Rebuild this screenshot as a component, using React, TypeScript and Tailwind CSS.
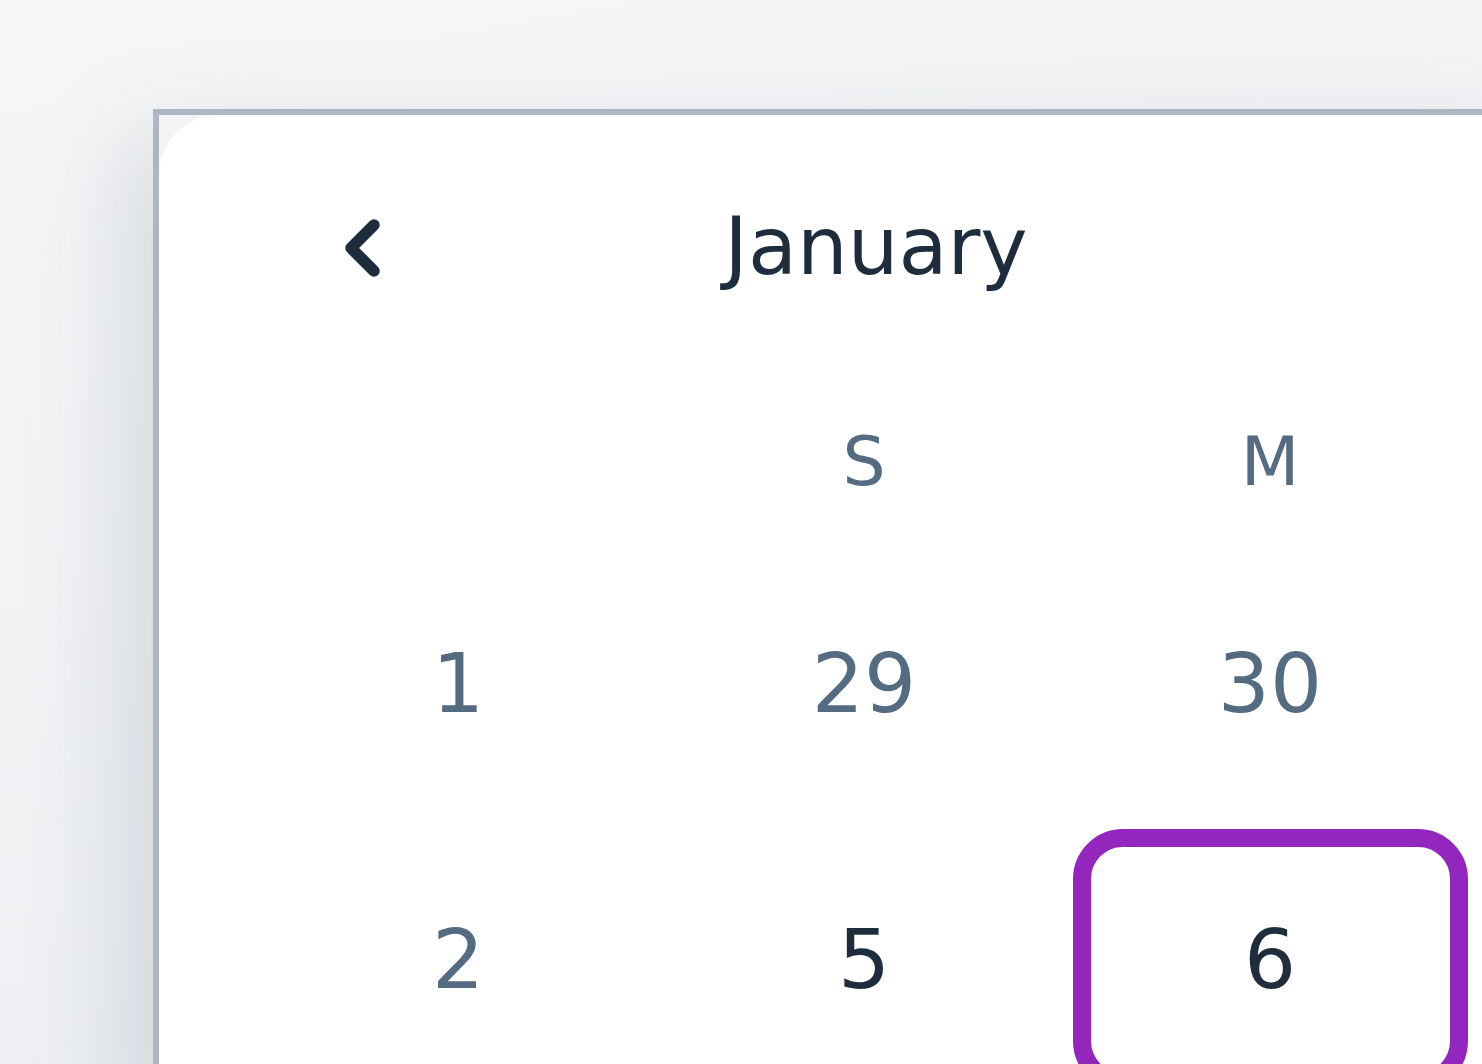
import React from "react";

const weekdays = ["S", "M"];

const rows = [
  { week: "1", days: [{ n: "29", muted: true }, { n: "30", muted: true }] },
  { week: "2", days: [{ n: "5" }, { n: "6", selected: true }] },
];

const ChevronLeft = () => (
  <svg width="48" height="64" viewBox="0 0 48 64" fill="none">
    <path
      d="M35 10 L12 33 L35 56"
      stroke="#1d2d3e"
      strokeWidth="11.5"
      strokeLinecap="round"
      strokeLinejoin="round"
    />
  </svg>
);

const App = () => {
  return (
    <div
      className="w-[1482px] h-[1064px] overflow-hidden bg-[linear-gradient(170deg,#f5f6f7,#eceef1)] pl-[153px] pt-[109px]"
      style={{ fontFamily: '"DejaVu Sans", "Noto Sans", sans-serif' }}
    >
      <div className="w-[1400px] h-[1000px] border-l-[6px] border-t-[6px] border-[#aeb6c1] bg-[#f2f4f6] shadow-[-30px_30px_90px_rgba(90,105,125,0.18)]">
        <div className="h-full w-full bg-white rounded-tl-[60px] pl-[96px] pt-[82px]">
          {/* header */}
          <div className="flex items-center h-[100px]">
            <button className="ml-[60px] w-[96px] h-[96px] flex items-center justify-center">
              <ChevronLeft />
            </button>
            <div className="w-[930px] text-center text-[80px] leading-none text-[#1d2d3e]">
              January
            </div>
          </div>

          {/* weekday row */}
          <div className="grid grid-cols-[406px_406px_406px] mt-[100px] h-[130px] items-center text-center text-[68px] leading-none text-[#556b82]">
            <div />
            {weekdays.map((d) => (
              <div key={d}>{d}</div>
            ))}
          </div>

          {/* day rows */}
          <div className="mt-[19px]">
            {rows.map((r) => (
              <div
                key={r.week}
                className="grid grid-cols-[406px_406px_406px] h-[276px] items-center text-center text-[82px] leading-none"
              >
                <div className="text-[#556b82]">{r.week}</div>
                {r.days.map((d) => (
                  <div key={d.n} className="flex justify-center">
                    <div
                      className={
                        d.selected
                          ? "w-[395px] h-[262px] rounded-[50px] border-[18px] border-[#9327bd] flex items-center justify-center text-[#1d2d3e]"
                          : d.muted
                          ? "w-[395px] h-[262px] flex items-center justify-center text-[#556b82]"
                          : "w-[395px] h-[262px] flex items-center justify-center text-[#1d2d3e]"
                      }
                    >
                      {d.n}
                    </div>
                  </div>
                ))}
              </div>
            ))}
          </div>
        </div>
      </div>
    </div>
  );
};

export default App;
